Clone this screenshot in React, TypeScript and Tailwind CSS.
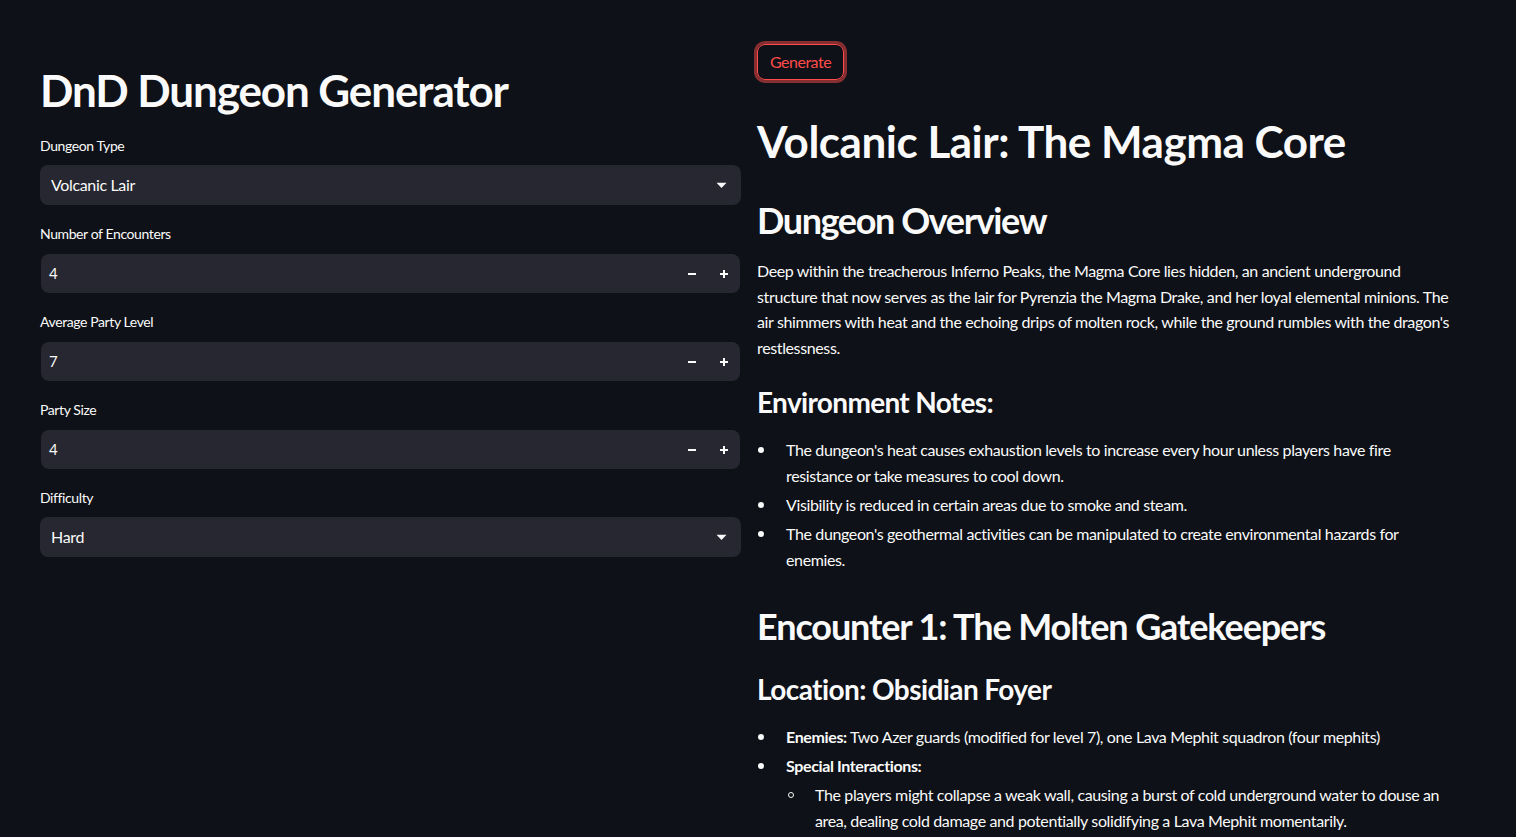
import React from "react";

const font = { fontFamily: "Lato, 'Liberation Sans', sans-serif" };

function Label({ children }: { children: React.ReactNode }) {
  return (
    <div className="h-[24px] mb-[8px] flex items-center text-[14px] text-[#fafafa] tracking-[-0.4px]">
      {children}
    </div>
  );
}

function Caret() {
  return (
    <svg width="11" height="7" viewBox="0 0 11 7" className="text-[#fafafa]">
      <path d="M0.5 0.8 L10.5 0.8 L5.5 6 Z" fill="currentColor" />
    </svg>
  );
}

function Select({ label, value }: { label: string; value: string }) {
  return (
    <div className="mb-[16px]">
      <Label>{label}</Label>
      <div className="h-[40px] rounded-[8px] bg-[#262730] flex items-center pl-[11px] pr-[14px] justify-between">
        <span className="text-[16px] text-[#fafafa] tracking-[-0.35px]">{value}</span>
        <Caret />
      </div>
    </div>
  );
}

function Minus() {
  return (
    <svg width="10" height="10" viewBox="0 0 10 10">
      <rect x="1" y="4" width="8" height="2" fill="#fafafa" />
    </svg>
  );
}
function Plus() {
  return (
    <svg width="10" height="10" viewBox="0 0 10 10">
      <rect x="1" y="4" width="8" height="2" fill="#fafafa" />
      <rect x="4" y="1" width="2" height="8" fill="#fafafa" />
    </svg>
  );
}

function NumberInput({ label, value }: { label: string; value: string }) {
  return (
    <div className="mb-[16px]">
      <Label>{label}</Label>
      <div className="h-[40px] pt-[1px]">
        <div className="h-[39px] ml-[1px] mr-[1px] rounded-[8px] bg-[#262730] flex items-center">
          <span className="flex-1 pl-[8px] text-[15px] text-[#fafafa]">{value}</span>
          <div className="w-[32px] h-full flex items-center justify-center">
            <Minus />
          </div>
          <div className="w-[32px] h-full flex items-center justify-center">
            <Plus />
          </div>
        </div>
      </div>
    </div>
  );
}

function Li({ children, nested }: { children: React.ReactNode; nested?: boolean }) {
  return (
    <li className="relative mb-[3.4px] leading-[25.6px]">
      <span
        className={
          nested
            ? "absolute left-[-27px] top-[10px] w-[6px] h-[6px] rounded-full border border-[#fafafa]"
            : "absolute left-[-28px] top-[10px] w-[6px] h-[6px] rounded-full bg-[#fafafa]"
        }
      />
      {children}
    </li>
  );
}

export default function App() {
  return (
    <div className="h-[837px] w-[1516px] overflow-hidden bg-[#0e1117] text-[#fafafa]" style={font}>
      <div className="flex pl-[40px] gap-[16px]">
        {/* Left column */}
        <div className="w-[701px] pt-[64px]">
          <h1 className="text-[44px] font-bold leading-[53px] mb-[16px] tracking-[-1.1px]">
            DnD Dungeon Generator
          </h1>
          <Select label="Dungeon Type" value="Volcanic Lair" />
          <NumberInput label="Number of Encounters" value="4" />
          <NumberInput label="Average Party Level" value="7" />
          <NumberInput label="Party Size" value="4" />
          <Select label="Difficulty" value="Hard" />
        </div>

        {/* Right column */}
        <div className="w-[704px] pt-[44px] text-[16px] tracking-[-0.37px]">
          <button className="h-[36px] px-[12px] rounded-[8px] border border-[#ff4b4b] text-[#ff4b4b] text-[16px] tracking-[-0.5px] shadow-[0_0_0_3px_rgba(255,75,75,0.5)] bg-transparent">
            Generate
          </button>
          <h1 className="mt-[35px] text-[44px] font-bold leading-[53px] tracking-[-0.48px]">
            Volcanic Lair: The Magma Core
          </h1>
          <h2 className="mt-[31px] text-[36px] font-bold leading-[43px] tracking-[-1.4px]">Dungeon Overview</h2>
          <p className="mt-[16px] leading-[25.6px]">
            Deep within the treacherous Inferno Peaks, the Magma Core lies hidden, an ancient underground
            structure that now serves as the lair for Pyrenzia the Magma Drake, and her loyal elemental
            minions. The air shimmers with heat and the echoing drips of molten rock, while the ground
            rumbles with the dragon's restlessness.
          </p>
          <h3 className="mt-[25px] text-[28px] font-bold leading-[34px] tracking-[-0.67px]">Environment Notes:</h3>
          <ul className="mt-[18px] pl-[29px] pr-[12px]">
            <Li>
              The dungeon's heat causes exhaustion levels to increase every hour unless players have fire
              resistance or take measures to cool down.
            </Li>
            <Li>Visibility is reduced in certain areas due to smoke and steam.</Li>
            <Li>
              The dungeon's geothermal activities can be manipulated to create environmental hazards for
              enemies.
            </Li>
          </ul>
          <h2 className="mt-[33px] text-[36px] font-bold leading-[43px] tracking-[-1.1px]">
            Encounter 1: The Molten Gatekeepers
          </h2>
          <h3 className="mt-[24px] text-[28px] font-bold leading-[34px] tracking-[-0.58px]">Location: Obsidian Foyer</h3>
          <ul className="mt-[18px] pl-[29px] pr-[12px]">
            <Li>
              <b className="font-bold">Enemies:</b> Two Azer guards (modified for level 7), one Lava Mephit
              squadron (four mephits)
            </Li>
            <Li>
              <b className="font-bold">Special Interactions:</b>
              <ul className="mt-[3.4px] pl-[29px]">
                <Li nested>
                  The players might collapse a weak wall, causing a burst of cold underground water to douse
                  an area, dealing cold damage and potentially solidifying a Lava Mephit momentarily.
                </Li>
              </ul>
            </Li>
          </ul>
        </div>
      </div>
    </div>
  );
}
